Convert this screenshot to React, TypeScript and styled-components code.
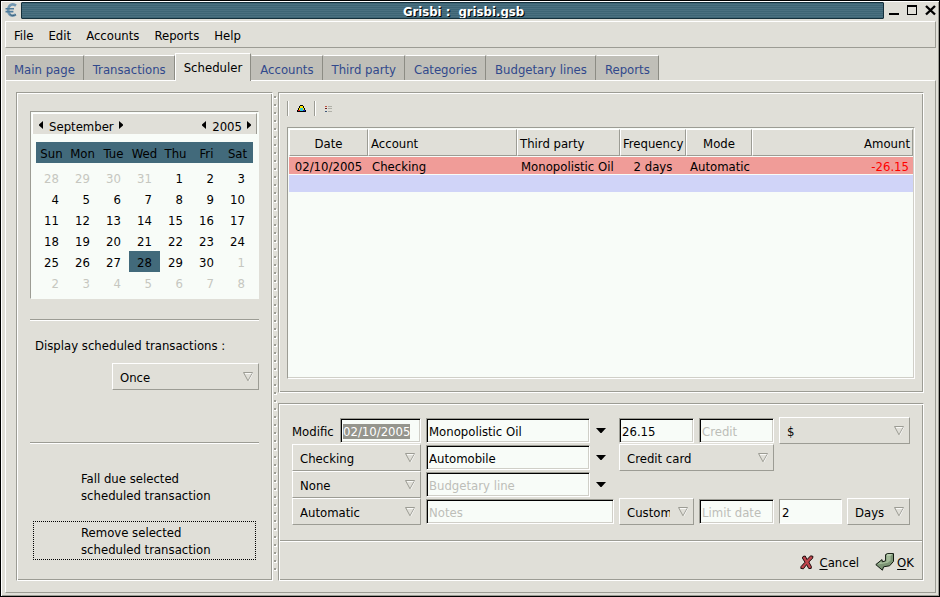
import React, { useEffect, useRef } from 'react';
import styled, { createGlobalStyle, css } from 'styled-components';

const color = {
  face: '#e0dfd8',
  base: '#f8fcf8',
  light: '#ffffff',
  dark: '#9c9c94',
  accent: '#426a7b',
  tab: '#c0bfb8',
  link: '#31498c',
  faded: '#c6c7c0',
};

const GlobalStyle = createGlobalStyle`
  *, *::before, *::after { box-sizing: border-box; }
  body { margin: 0; background: #000; }
  body, button, input, select, table {
    font-family: "DejaVu Sans Condensed", "DejaVu Sans", sans-serif;
    font-size: 13px;
    line-height: 17px;
    color: #000;
  }
  button, input, select { margin: 0; border-radius: 0; outline: none; }
`;

const raised = css`
  border: 1px solid;
  border-color: ${color.light} ${color.dark} ${color.dark} ${color.light};
`;

const etched = css`
  border: 1px solid;
  border-color: ${color.dark} ${color.light} ${color.light} ${color.dark};
  box-shadow: inset 1px 1px 0 ${color.light}, inset -1px -1px 0 ${color.dark};
`;

const Window = styled.div`
  min-height: 100vh;
  display: flex;
  flex-direction: column;
  padding: 0 3px 3px 4px;
  background: ${color.face};
  border: 1px solid #000;
  box-shadow: inset 1px 1px 0 ${color.light}, inset -1px -1px 0 ${color.dark};
`;

const TitleRow = styled.header`
  display: flex;
  align-items: flex-start;
  height: 18px;
  margin-bottom: 2px;
  padding-top: 1px;
`;

const AppMark = styled.svg`
  flex: none;
  width: 12px;
  height: 14px;
  margin: 1px 4px 0 0;
`;

const TitleBar = styled.h1`
  flex: 1;
  height: 17px;
  margin: 0;
  padding-left: 22px;
  overflow: hidden;
  border: 1px solid #14303c;
  border-radius: 1px;
  background: repeating-linear-gradient(#3d6575 0 1px, #4a7080 1px 2px);
  color: #fff;
  font-size: 13px;
  font-weight: bold;
  line-height: 17px;
  text-align: center;
  text-shadow: 1px 1px 0 #000;
  white-space: pre;
`;

const WindowButtons = styled.div`
  display: flex;
  gap: 7px;
  padding: 3px 0 0 5px;
`;

const WindowButton = styled.button`
  width: 11px;
  height: 11px;
  padding: 0;
  border: 0;
  background: none;
  svg { display: block; }
`;

const MenuBar = styled.nav`
  ${raised}
  display: flex;
  gap: 1px;
  height: 27px;
  padding: 0 1px;
`;

const MenuItem = styled.button`
  padding: 2px 7px 0;
  border: 0;
  background: none;
`;

const TabRow = styled.div`
  display: flex;
  align-items: flex-end;
  height: 27px;
  margin-top: 5px;
`;

const Tab = styled.button<{ $active?: boolean }>`
  height: 25px;
  padding: 2px 8px 0;
  border: 1px solid;
  border-width: 1px 1px 0;
  border-color: ${color.light} #8c8c84 ${color.light} ${color.tab};
  background: ${color.tab};
  color: ${color.link};
  &:first-child { border-left-color: ${color.light}; }
  ${p => p.$active && css`
    z-index: 1;
    height: 28px;
    margin-bottom: -1px;
    padding-bottom: 2px;
    border-left-color: ${color.light};
    background: ${color.face};
    color: #000;
  `}
`;

const Notebook = styled.main`
  ${raised}
  flex: 1;
  display: flex;
  padding: 11px 11px 11px 10px;
`;

const Sidebar = styled.aside`
  ${etched}
  flex: 0 0 257px;
  display: flex;
  flex-direction: column;
  padding: 18px 13px 0;
`;

const PaneHandle = styled.div`
  flex: 0 0 5px;
  margin: 4px 0 9px;
  background:
    linear-gradient(${color.dark} 0 2px, transparent 2px) 1px 0 / 2px 8px repeat-y,
    linear-gradient(transparent 0 1px, ${color.light} 1px 3px, transparent 3px) 1px 0 / 3px 8px repeat-y;
`;

const Content = styled.div`
  flex: 1;
  min-width: 0;
  display: flex;
  flex-direction: column;
  gap: 10px;
`;

const Calendar = styled.section`
  padding: 1px 0 5px 1px;
  background: ${color.base};
  border: 1px solid;
  border-color: ${color.dark} ${color.base} ${color.base} ${color.dark};
`;

const CalendarHeader = styled.div`
  ${raised}
  display: flex;
  align-items: center;
  justify-content: space-between;
  height: 21px;
  margin-right: 1px;
  padding-top: 4px;
  border-bottom: 0;
  background: ${color.face};
`;

const Stepper = styled.div`
  display: flex;
  align-items: center;
`;

const StepButton = styled.button`
  width: 16px;
  height: 17px;
  padding: 0;
  border: 0;
  background: none;
  display: flex;
  align-items: center;
  justify-content: center;
  & + span { min-width: 28px; }
  span + & { width: 14px; padding-bottom: 2px; }
  &:first-child { padding-bottom: 2px; }
`;

const DayTable = styled.table`
  width: calc(100% - 9px);
  margin: 8px 5px 0 4px;
  table-layout: fixed;
  border-spacing: 0;
  tbody::before { content: ''; display: block; height: 4px; }
`;

const Weekday = styled.th`
  height: 21px;
  padding: 2px 0 0;
  background: ${color.accent};
  font-weight: normal;
  text-align: center;
`;

const Day = styled.td<{ $outside: boolean; $selected: boolean }>`
  height: 21px;
  padding: 1px 8px 0 0;
  text-align: right;
  color: ${p => (p.$outside ? color.faded : '#000')};
  background: ${p => (p.$selected ? color.accent : 'transparent')};
`;

const Rule = styled.hr<{ $top: number }>`
  width: 100%;
  height: 2px;
  margin: ${p => p.$top}px 0 0;
  border: 0;
  border-top: 1px solid ${color.dark};
  background: ${color.light};
`;

const FilterLabel = styled.label`
  margin: 16px 0 9px;
  padding-left: 5px;
`;

const FilterSlot = styled.div`
  display: flex;
  width: 147px;
  margin-left: auto;
`;

const SideButtons = styled.div`
  display: flex;
  flex-direction: column;
  gap: 15px;
  margin: 23px 3px 0;
`;

const SideButton = styled.button<{ $focused?: boolean }>`
  padding: 2px 0 1px 47px;
  border: 1px dotted ${p => (p.$focused ? '#000' : 'transparent')};
  background: none;
  text-align: left;
  white-space: pre-line;
`;

const ListPanel = styled.section`
  ${etched}
  flex: 1;
  display: flex;
  flex-direction: column;
  padding: 8px 8px 13px;
`;

const Toolbar = styled.div`
  display: flex;
  height: 15px;
  margin-bottom: 11px;
`;

const ToolButton = styled.button`
  width: 27px;
  padding: 0 0 0 1px;
  border: 0;
  border-left: 1px solid ${color.dark};
  box-shadow: inset 1px 0 0 ${color.light};
  background: none;
  display: flex;
  align-items: center;
  justify-content: center;
`;

const ListFrame = styled.div`
  flex: 1;
  background: ${color.base};
  border: 1px solid;
  border-color: ${color.dark} ${color.light} ${color.light} ${color.dark};
  box-shadow: inset -1px -1px 0 #d0cfc8;
  padding: 0 1px;
`;

const List = styled.table`
  width: 100%;
  table-layout: fixed;
  border-spacing: 0 1px;
`;

type Align = 'left' | 'center' | 'right';

const HeadCell = styled.th<{ $align: Align }>`
  ${raised}
  height: 27px;
  padding: 2px 2px 0;
  background: ${color.face};
  font-weight: normal;
  text-align: ${p => p.$align};
  white-space: nowrap;
`;

const Row = styled.tr<{ $tone: string }>`
  background: ${p => p.$tone};
`;

const Cell = styled.td<{ $align: Align; $negative?: boolean }>`
  height: 17px;
  padding: 2px 4px 0;
  line-height: 15px;
  text-align: ${p => p.$align};
  white-space: nowrap;
  color: ${p => (p.$negative ? '#ff0000' : '#000')};
`;

const FormPanel = styled.section`
  ${etched}
  padding: 1px;
`;

const FormGrid = styled.form`
  display: grid;
  grid-template-columns: minmax(0, 129fr) minmax(0, 188fr) minmax(0, 75fr) minmax(0, 75fr) minmax(0, 131fr);
  grid-auto-rows: 27px;
  column-gap: 5px;
  padding: 12px 12px 0;
`;

const Field = styled.div<{ $span?: number; $col?: number }>`
  grid-column: ${p => p.$col ?? 'auto'} / span ${p => p.$span ?? 1};
  display: flex;
  align-items: center;
  gap: 5px;
  min-width: 0;
`;

const SplitField = styled(Field)`
  display: grid;
  grid-template-columns: minmax(0, 1fr) minmax(0, 1fr);
`;

const FieldLabel = styled.label`
  flex: 1;
  overflow: hidden;
  white-space: nowrap;
  padding-top: 2px;
`;

const Entry = styled.input<{ $flat?: boolean }>`
  flex: 1;
  min-width: 0;
  height: 25px;
  padding: 2px 2px 0;
  background: ${color.base};
  border: 1px solid;
  border-color: ${color.dark} ${color.light} ${color.light} ${color.dark};
  box-shadow: ${p => (p.$flat ? 'none' : 'inset 1px 1px 0 #000, inset -1px -1px 0 #d0cfc8')};
  &::placeholder { color: #bdbeb8; opacity: 1; }
  &::selection { background: rgba(148, 148, 140, 0.99); color: #fff; }
`;

const DateEntry = styled(Entry)`
  flex: 0 0 81px;
`;

const Picker = styled.div`
  flex: 1;
  min-width: 0;
  display: grid;
  align-items: center;
  & > * { grid-area: 1 / 1; }
  svg { justify-self: end; margin-right: 5px; pointer-events: none; }
`;

const Select = styled.select`
  ${raised}
  appearance: none;
  width: 100%;
  height: 27px;
  padding: 2px 23px 0 7px;
  background: ${color.face};
`;

const DropButton = styled.button`
  flex: 0 0 19px;
  height: 25px;
  padding: 0 8px 1px 1px;
  border: 0;
  background: none;
  svg { display: block; }
`;

const Actions = styled.footer`
  display: flex;
  justify-content: flex-end;
  gap: 16px;
  padding: 9px 8px 6px;
`;

const ActionButton = styled.button<{ $gap: number }>`
  display: flex;
  align-items: center;
  gap: ${p => p.$gap}px;
  padding: 0;
  border: 0;
  background: none;
  height: 22px;
  u { text-underline-offset: 2px; }
`;

const Triangle = () => (
  <svg width="11" height="10" viewBox="0 0 11 10" fill="none" aria-hidden="true">
    <path d="M9.5 1L5.5 9" stroke="#fff" strokeWidth="1.4" />
    <path d="M0.5 0.5H9.5L5 8.8Z" stroke={color.dark} />
    <path d="M2 1.5H8.5" stroke="#fff" strokeWidth="0.8" />
  </svg>
);

const Caret = () => (
  <svg width="10" height="5" viewBox="0 0 10 5" aria-hidden="true">
    <path d="M0 0H10L5.5 5H4.5Z" />
  </svg>
);

const Arrow = ({ left }: { left?: boolean }) => (
  <svg width="4" height="8" viewBox="0 0 4 8" aria-hidden="true">
    <path d={left ? 'M4 0V8L0 4.5V3.5Z' : 'M0 0V8L4 4.5V3.5Z'} />
  </svg>
);

const CancelIcon = () => (
  <svg width="14" height="15" viewBox="0 0 14 15" aria-hidden="true">
    <path
      d="M3 1.5L5.2 1L7 4.6L10.6 0.8L13 1.4L12.6 3.2L8.8 7L11.4 11.6L11.2 13.4L8.8 13.6L6.6 9.6L3.4 13.8L0.8 13.4L1 11.6L5 7.2L2.4 3Z"
      fill="#c0444c"
      stroke="#1c0c0c"
      strokeWidth="1"
      strokeLinejoin="round"
    />
  </svg>
);

const OkIcon = () => (
  <svg width="20" height="18" viewBox="0 0 20 18" aria-hidden="true">
    <path
      d="M10.6 1.6L12.4 0.6H18.5V8.4L14.6 12.8L8.6 13.8L7.4 17.2L0.8 11.6L7 6.6L7.4 8.8L10.6 7.8Z"
      fill="#7b9474"
      stroke="#10180f"
      strokeWidth="1"
      strokeLinejoin="round"
    />
    <path d="M11.4 2.2L12.8 1.3H15.6V7.4L12.8 9.8L6.6 10.9L2.4 11.3L6.3 8.2L6.8 9.8L11.4 8.5Z" fill="#a3bb99" />
    <path d="M12.6 1.3H17.6L16 2.6H11.8Z" fill="#c6d8bd" />
  </svg>
);

const Dropdown = ({ label, id, value }: { label: string; id?: string; value: string }) => (
  <Picker>
    <Select id={id} aria-label={label} defaultValue={value}>
      <option>{value}</option>
    </Select>
    <Triangle />
  </Picker>
);

const Combo = ({ label, value }: { label: string; value?: string }) => (
  <Field>
    <Entry aria-label={label} placeholder={label} defaultValue={value} />
    <DropButton type="button" aria-label={`Choose ${label}`}><Caret /></DropButton>
  </Field>
);

const menus = ['File', 'Edit', 'Accounts', 'Reports', 'Help'];
const tabs = ['Main page', 'Transactions', 'Scheduler', 'Accounts', 'Third party', 'Categories', 'Budgetary lines', 'Reports'];
const weekdays = ['Sun', 'Mon', 'Tue', 'Wed', 'Thu', 'Fri', 'Sat'];

const weeks = Array.from({ length: 6 }, (_, week) =>
  Array.from({ length: 7 }, (_, day) => {
    const offset = week * 7 + day - 3;
    if (offset < 1) return { date: offset + 31, outside: true };
    if (offset > 30) return { date: offset - 30, outside: true };
    return { date: offset, outside: false };
  }),
);

const columns: { title: string; width: number; align: Align; value: string }[] = [
  { title: 'Date', width: 79, align: 'center', value: '02/10/2005' },
  { title: 'Account', width: 149, align: 'left', value: 'Checking' },
  { title: 'Third party', width: 103, align: 'left', value: 'Monopolistic Oil' },
  { title: 'Frequency', width: 66, align: 'center', value: '2 days' },
  { title: 'Mode', width: 66, align: 'center', value: 'Automatic' },
  { title: 'Amount', width: 161, align: 'right', value: '-26.15' },
];

export default function App() {
  const dateRef = useRef<HTMLInputElement>(null);
  useEffect(() => {
    dateRef.current?.focus();
    dateRef.current?.select();
  }, []);

  return (
    <>
      <GlobalStyle />
      <Window>
        <TitleRow>
          <AppMark viewBox="0 0 12 14" fill="none" aria-hidden="true">
            <path d="M11 2.6C7.4 -0.2 3.4 2 3.2 7C3.2 12 7 14 10.8 11.4" stroke="#7398b2" strokeWidth="2.6" />
            <path d="M0.5 5.7H9M0.5 8.6H8.4" stroke="#4f7c9c" strokeWidth="1.6" />
            <path d="M4.6 11.2C6.4 13 9 13 11 11.6" stroke="#3b627c" strokeWidth="1" />
          </AppMark>
          <TitleBar>{'Grisbi :  grisbi.gsb'}</TitleBar>
          <WindowButtons>
            <WindowButton aria-label="Minimize">
              <svg width="11" height="11"><path d="M0 8H10V10H0Z" /></svg>
            </WindowButton>
            <WindowButton aria-label="Maximize">
              <svg width="11" height="11"><path d="M0 0H10V10H0ZM1 2V9H9V2Z" fillRule="evenodd" /></svg>
            </WindowButton>
            <WindowButton aria-label="Close">
              <svg width="11" height="11"><path d="M1 1L10 9.5M10 1L1 9.5" stroke="#000" strokeWidth="2.4" /></svg>
            </WindowButton>
          </WindowButtons>
        </TitleRow>

        <MenuBar>{menus.map(m => <MenuItem key={m}>{m}</MenuItem>)}</MenuBar>

        <TabRow role="tablist">
          {tabs.map(t => (
            <Tab key={t} role="tab" aria-selected={t === 'Scheduler'} $active={t === 'Scheduler'}>{t}</Tab>
          ))}
        </TabRow>

        <Notebook>
          <Sidebar>
            <Calendar>
              <CalendarHeader>
                <Stepper>
                  <StepButton aria-label="Previous month"><Arrow left /></StepButton>
                  <span>September</span>
                  <StepButton aria-label="Next month"><Arrow /></StepButton>
                </Stepper>
                <Stepper>
                  <StepButton aria-label="Previous year"><Arrow left /></StepButton>
                  <span>2005</span>
                  <StepButton aria-label="Next year"><Arrow /></StepButton>
                </Stepper>
              </CalendarHeader>
              <DayTable>
                <thead>
                  <tr>{weekdays.map(d => <Weekday key={d} scope="col">{d}</Weekday>)}</tr>
                </thead>
                <tbody>
                  {weeks.map((week, i) => (
                    <tr key={i}>
                      {week.map(({ date, outside }) => (
                        <Day key={date} $outside={outside} $selected={date === 28 && !outside}>{date}</Day>
                      ))}
                    </tr>
                  ))}
                </tbody>
              </DayTable>
            </Calendar>

            <Rule $top={20} />
            <FilterLabel htmlFor="display">Display scheduled transactions :</FilterLabel>
            <FilterSlot><Dropdown id="display" label="Display scheduled transactions" value="Once" /></FilterSlot>
            <Rule $top={52} />

            <SideButtons>
              <SideButton>{'Fall due selected\nscheduled transaction'}</SideButton>
              <SideButton $focused>{'Remove selected\nscheduled transaction'}</SideButton>
            </SideButtons>
          </Sidebar>

          <PaneHandle />

          <Content>
            <ListPanel>
              <Toolbar>
                <ToolButton aria-label="Show details">
                  <svg width="9" height="7" viewBox="0 0 9 7" shapeRendering="crispEdges">
                    <path d="M3 0H6V1H7V3H8V5H9V7H0V5H1V3H2V1H3Z" fill="#000" />
                    <path d="M3 1H6V3H7V5H8V6H1V5H2V3H3Z" fill="#ffe600" />
                    <path d="M1 5H3V6H1Z" fill="#e02020" />
                    <path d="M3 3H6V6H3Z" fill="#30c8d8" />
                    <path d="M6 5H8V6H6Z" fill="#2030d0" />
                  </svg>
                </ToolButton>
                <ToolButton aria-label="Show list">
                  <svg width="7" height="6" viewBox="0 0 7 6" shapeRendering="crispEdges">
                    <path d="M0 0H2V1H0Z" fill="#c05040" />
                    <path d="M0 2H2V3H0Z" fill="#702020" />
                    <path d="M0 5H2V6H0Z" fill="#405878" />
                    <path d="M3 0H7V1H3ZM3 2H7V3H3ZM3 5H7V6H3Z" fill="#b0b0a8" />
                  </svg>
                </ToolButton>
              </Toolbar>
              <ListFrame>
                <List>
                  <colgroup>{columns.map(c => <col key={c.title} width={c.width} />)}</colgroup>
                  <thead>
                    <tr>{columns.map(c => <HeadCell key={c.title} scope="col" $align={c.align}>{c.title}</HeadCell>)}</tr>
                  </thead>
                  <tbody>
                    <Row $tone="#f09c98">
                      {columns.map(c => (
                        <Cell key={c.title} $align={c.align} $negative={c.value.startsWith('-')}>{c.value}</Cell>
                      ))}
                    </Row>
                    <Row $tone="#d0d4f8">
                      {columns.map(c => <Cell key={c.title} $align={c.align} />)}
                    </Row>
                  </tbody>
                </List>
              </ListFrame>
            </ListPanel>

            <FormPanel>
              <FormGrid id="entry" onSubmit={e => e.preventDefault()}>
                <Field>
                  <FieldLabel htmlFor="date">Modific</FieldLabel>
                  <DateEntry id="date" ref={dateRef} defaultValue="02/10/2005" />
                </Field>
                <Combo label="Third party" value="Monopolistic Oil" />
                <Field><Entry aria-label="Debit" defaultValue="26.15" /></Field>
                <Field><Entry aria-label="Credit" placeholder="Credit" /></Field>
                <Field><Dropdown label="Currency" value="$" /></Field>

                <Field $col={1}><Dropdown label="Account" value="Checking" /></Field>
                <Combo label="Category" value="Automobile" />
                <Field $span={2}><Dropdown label="Payment method" value="Credit card" /></Field>

                <Field $col={1}><Dropdown label="Contra account" value="None" /></Field>
                <Combo label="Budgetary line" />

                <Field $col={1}><Dropdown label="Mode" value="Automatic" /></Field>
                <Field><Entry aria-label="Notes" placeholder="Notes" /></Field>
                <Field><Dropdown label="Frequency" value="Custom" /></Field>
                <Field><Entry aria-label="Limit date" placeholder="Limit date" /></Field>
                <SplitField>
                  <Entry $flat aria-label="Interval" defaultValue="2" />
                  <Dropdown label="Interval unit" value="Days" />
                </SplitField>
              </FormGrid>
              <Rule $top={15} />
              <Actions>
                <ActionButton type="button" $gap={5}><CancelIcon /><span><u>C</u>ancel</span></ActionButton>
                <ActionButton type="submit" form="entry" $gap={2}><OkIcon /><span><u>O</u>K</span></ActionButton>
              </Actions>
            </FormPanel>
          </Content>
        </Notebook>
      </Window>
    </>
  );
}
